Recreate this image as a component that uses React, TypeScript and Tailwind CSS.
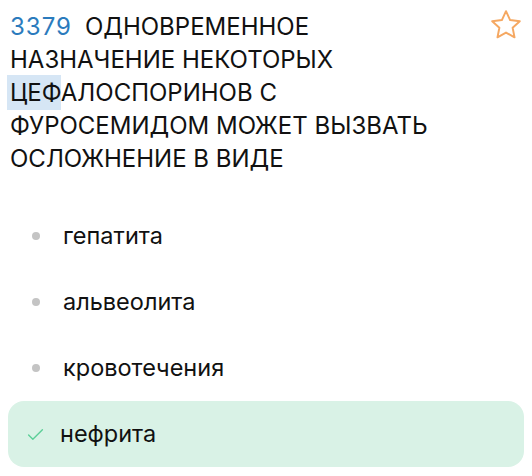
const options = [
  { text: 'гепатита', correct: false },
  { text: 'альвеолита', correct: false },
  { text: 'кровотечения', correct: false },
  { text: 'нефрита', correct: true },
];

const StarIcon = () => (
  <svg width="36" height="36" viewBox="0 0 24 24" fill="none" stroke="#f5a862" strokeWidth="1.3" strokeLinejoin="round">
    <path d="M12 2.8l2.75 5.9 6.45.75-4.78 4.4 1.27 6.37L12 17.05 6.31 20.22l1.27-6.37L2.8 9.45l6.45-.75L12 2.8z" />
  </svg>
);

const CheckIcon = () => (
  <svg width="17" height="17" viewBox="0 0 16 16" fill="none" stroke="#5ccf98" strokeWidth="1.3" strokeLinecap="round" strokeLinejoin="round">
    <path d="M1.5 8.5l4 4 9-9" />
  </svg>
);

export default function App() {
  return (
    <div className="w-[532px] h-[476px] bg-white font-['Inter','Noto_Sans',sans-serif] text-[#111]">
      <div className="flex justify-between pl-[10px] pr-[8px] pt-[10px]">
        <h1 className="w-[446px] text-[24px] leading-[33px] font-normal">
          <span className="text-[#2b7bbd] tracking-[1px] mr-[13px]">3379</span>
          ОДНОВРЕМЕННОЕ НАЗНАЧЕНИЕ НЕКОТОРЫХ{' '}
          <span className="bg-[#d6e6f5] -ml-[3px] pl-[3px] py-[3px]">ЦЕФ</span>АЛОСПОРИНОВ С ФУРОСЕМИДОМ МОЖЕТ ВЫЗВАТЬ ОСЛОЖНЕНИЕ В ВИДЕ
        </h1>
        <div className="-mt-[3px]">
          <StarIcon />
        </div>
      </div>

      <ul className="mt-[28px] flex flex-col pl-[8px] pr-[8px]">
        {options.map((o) =>
          o.correct ? (
            <li key={o.text} className="flex items-center h-[66px] rounded-[16px] bg-[#d9f2e6] pl-[19px]">
              <CheckIcon />
              <span className="ml-[16px] text-[23.5px]">{o.text}</span>
            </li>
          ) : (
            <li key={o.text} className="flex items-center h-[66px] pl-[24px]">
              <span className="w-[8px] h-[8px] rounded-full bg-[#c4c4c4]" />
              <span className="ml-[23px] text-[23.5px]">{o.text}</span>
            </li>
          )
        )}
      </ul>
    </div>
  );
}
